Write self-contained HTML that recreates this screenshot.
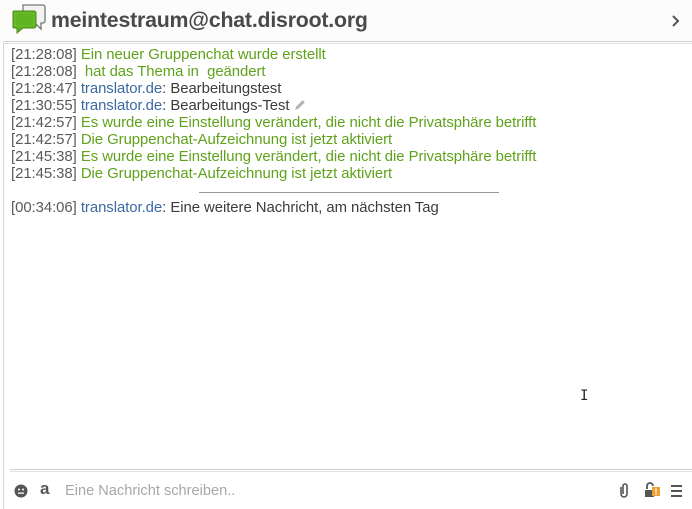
<!DOCTYPE html>
<html><head><meta charset="utf-8"><style>
*{margin:0;padding:0;box-sizing:border-box}
body{width:692px;height:509px;background:#fff;font-family:"Liberation Sans","DejaVu Sans",sans-serif;position:relative;overflow:hidden;color:#3c3c3c}
.hdr{position:absolute;left:0;top:0;width:692px;height:42px;background:#fcfcfc}
.title{position:absolute;left:51px;top:8px;font-size:21.3px;font-weight:bold;color:#4a4a4a;letter-spacing:-0.2px}
.hl{position:absolute;left:4px;top:41px;width:688px;height:3px;border-top:1px solid #cfcfcf;border-bottom:1px solid #dedede}
.lb{position:absolute;left:3px;top:42px;width:1px;height:467px;background:#d6d6d6}
.msgs{position:absolute;left:11px;top:47px;font-size:14.9px;line-height:17px;white-space:nowrap;letter-spacing:-0.05px}
.t{color:#5a5a5a}.g{color:#5fa21b}.b{color:#3b6aa0}.n{color:#3c3c3c}
.sep{position:absolute;left:199px;top:192px;width:300px;height:1px;background:#999}
.il{position:absolute;left:10px;top:469px;width:682px;height:3px;border-top:1px solid #cfcfcf;border-bottom:1px solid #e2e2e2}
.ph{position:absolute;left:65px;top:483px;font-size:14.6px;color:#a8a8a8}
</style></head><body>
<div class="hdr"></div>
<svg style="position:absolute;left:12px;top:4px" width="34" height="30" viewBox="0 0 34 30">
<path d="M11 1h20a2 2 0 0 1 2 2v14a2 2 0 0 1-2 2h-2v6l-6-6H11z" fill="#f2f2f2" stroke="#777" stroke-width="1.3"/>
<path d="M2 7h20a2 2 0 0 1 2 2v13a2 2 0 0 1-2 2H11l-6 5v-5H2a1 1 0 0 1-1-1V8a1 1 0 0 1 1-1z" fill="#5fb51f" stroke="#4a8a18" stroke-width="1"/>
<rect x="3" y="9" width="19" height="13" fill="none" stroke="#9bd86a" stroke-width=".6" stroke-dasharray="1 1"/>
</svg>
<div class="title">meintestraum@chat.disroot.org</div>
<svg style="position:absolute;left:671px;top:14px" width="10" height="14" viewBox="0 0 10 14"><path d="M2 2l5 5-5 5" fill="none" stroke="#555" stroke-width="2"/></svg>
<div class="hl"></div>
<div class="lb"></div>
<div class="msgs">
<div><span class="t">[21:28:08]</span> <span class="g">Ein neuer Gruppenchat wurde erstellt</span></div>
<div><span class="t">[21:28:08]</span> <span class="g">&nbsp;hat das Thema in &nbsp;geändert</span></div>
<div><span class="t">[21:28:47]</span> <span class="b">translator.de</span>: Bearbeitungstest</div>
<div><span class="t">[21:30:55]</span> <span class="b">translator.de</span>: Bearbeitungs-Test <svg width="13" height="13" viewBox="0 0 12 12" style="vertical-align:-1px"><path d="M1 11l1-3 6-6 2 2-6 6z" fill="#b5b5b5"/></svg></div>
<div><span class="t">[21:42:57]</span> <span class="g">Es wurde eine Einstellung verändert, die nicht die Privatsphäre betrifft</span></div>
<div><span class="t">[21:42:57]</span> <span class="g">Die Gruppenchat-Aufzeichnung ist jetzt aktiviert</span></div>
<div><span class="t">[21:45:38]</span> <span class="g">Es wurde eine Einstellung verändert, die nicht die Privatsphäre betrifft</span></div>
<div><span class="t">[21:45:38]</span> <span class="g">Die Gruppenchat-Aufzeichnung ist jetzt aktiviert</span></div>
<div>&nbsp;</div>
<div><span class="t">[00:34:06]</span> <span class="b">translator.de</span>: Eine weitere Nachricht, am nächsten Tag</div>
</div>
<div class="sep"></div>
<div style="position:absolute;left:580px;top:388px;font-size:14px;color:#222;font-family:'DejaVu Sans Mono',monospace">I</div>
<div class="il"></div>
<svg style="position:absolute;left:14px;top:484px" width="14" height="14" viewBox="0 0 14 14"><circle cx="7" cy="7" r="6.5" fill="#555"/><circle cx="5" cy="5.5" r="1" fill="#fff"/><circle cx="9" cy="5.5" r="1" fill="#fff"/><rect x="4" y="8.5" width="6" height="1.3" fill="#fff"/></svg>
<div style="position:absolute;left:40px;top:479px;font-size:17px;font-weight:bold;color:#555">a</div>
<div class="ph">Eine Nachricht schreiben..</div>
<svg style="position:absolute;left:618px;top:482px" width="12" height="17" viewBox="0 0 12 17"><path d="M3 5v7a3 3 0 0 0 6 0V4a2 2 0 0 0-4 0v8" fill="none" stroke="#555" stroke-width="1.6"/></svg>
<svg style="position:absolute;left:644px;top:481px" width="18" height="17" viewBox="0 0 18 17"><path d="M3 8V5a3 3 0 0 1 6 0" fill="none" stroke="#555" stroke-width="1.8"/><rect x="1" y="9" width="9" height="7" fill="#555"/><rect x="8" y="6" width="8" height="9" fill="#f0a030"/><rect x="11.3" y="7.5" width="1.4" height="4" fill="#fff"/><rect x="11.3" y="12.5" width="1.4" height="1.3" fill="#fff"/></svg>
<svg style="position:absolute;left:671px;top:485px" width="11" height="12" viewBox="0 0 11 12"><rect y="0" width="11" height="2" fill="#555"/><rect y="5" width="11" height="2" fill="#555"/><rect y="10" width="11" height="2" fill="#555"/></svg>
</body></html>
